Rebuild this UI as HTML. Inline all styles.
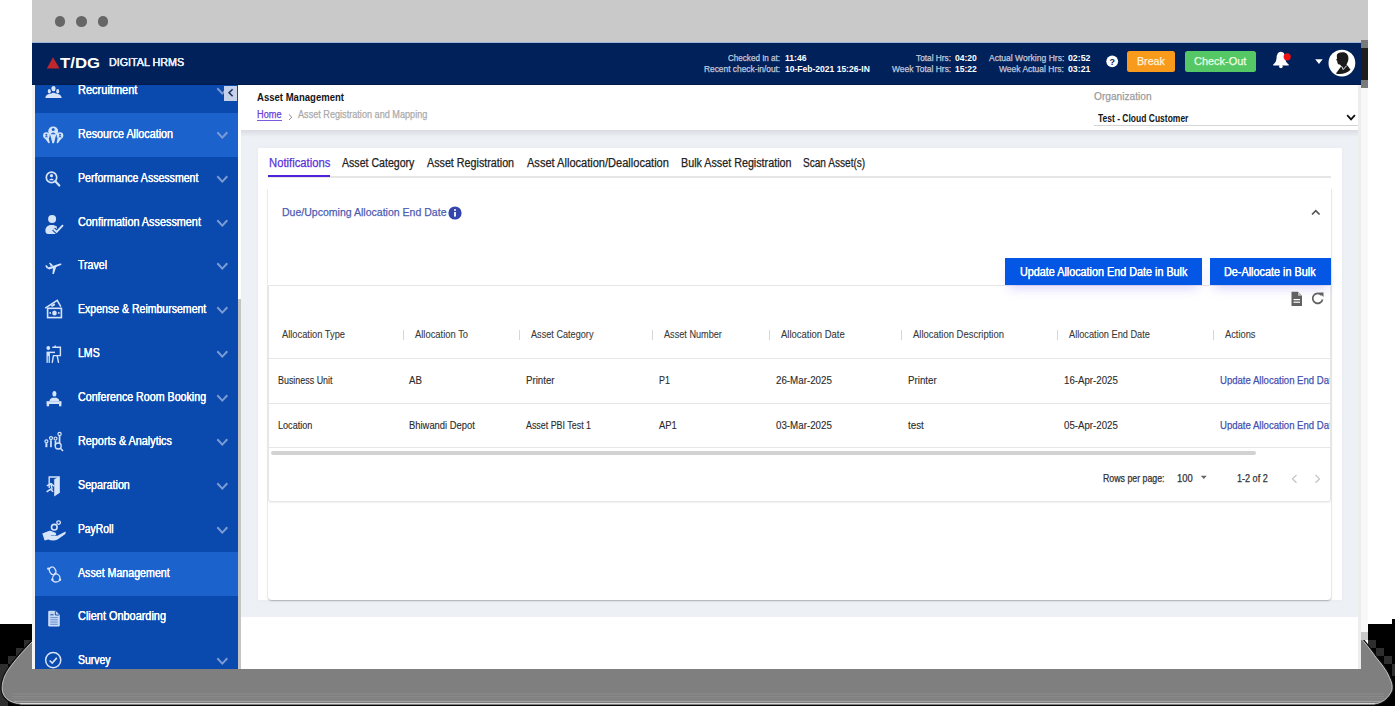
<!DOCTYPE html>
<html><head><meta charset="utf-8"><style>
html,body{margin:0;padding:0;}
body{width:1395px;height:706px;overflow:hidden;position:relative;background:#fff;font-family:"Liberation Sans",sans-serif;}
.r{position:absolute;display:block;}
.t{position:absolute;white-space:nowrap;transform-origin:0 0;}
.t4{-webkit-text-stroke:0.25px currentColor;}
</style></head><body>
<div class="r" style="left:0px;top:624px;width:32.00px;height:82.00px;background:#000;"></div>
<div class="r" style="left:1368px;top:624px;width:27.00px;height:82.00px;background:#000;"></div>
<div class="r" style="left:1392px;top:619px;width:3.00px;height:87.00px;background:#000;"></div>
<div class="r" style="left:0px;top:704.5px;width:1395.00px;height:1.50px;background:#000;"></div>
<svg class="r" style="left:0;top:0" width="1395" height="706">
<g fill="#2e2e2e"><rect x="24" y="640" width="8" height="8"/><rect x="16" y="648" width="8" height="8"/><rect x="8" y="656" width="8" height="8"/><rect x="0" y="664" width="8" height="42"/>
<rect x="1368" y="640" width="8" height="8"/><rect x="1376" y="648" width="8" height="8"/><rect x="1384" y="656" width="8" height="8"/><rect x="1392" y="664" width="3" height="12"/></g>
<path d="M32.7,641.3 C26,648 14,661 8.2,669.9 C4,676 2,683 2.2,689 C2.5,695 6,700 13.6,702.5 C16,703.4 19,703.9 21.8,703.9 L1372.3,703.9 C1376,703.9 1378,703.4 1380.6,702.3 C1386,700 1390,695 1391.9,690.2 C1392.5,686 1392,684 1391,681.2 C1389,676 1387,672 1385,669.2 C1381,663 1377,659 1374.6,655.6 C1370,649 1365,643 1361,638.3" fill="none" stroke="#111" stroke-width="3.4"/>
<path d="M32.7,641.3 C26,648 14,661 8.2,669.9 C4,676 2,683 2.2,689 C2.5,695 6,700 13.6,702.5 C16,703.4 19,703.9 21.8,703.9 L1372.3,703.9 C1376,703.9 1378,703.4 1380.6,702.3 C1386,700 1390,695 1391.9,690.2 C1392.5,686 1392,684 1391,681.2 C1389,676 1387,672 1385,669.2 C1381,663 1377,659 1374.6,655.6 C1370,649 1365,643 1361,638.3 L1361,669 L32.7,669 Z" fill="#7f7f7f"/>
<path d="M32.7,641.3 C26,648 14,661 8.2,669.9 C4,676 2,683 2.2,689 C2.5,695 6,700 13.6,702.5 C16,703.4 19,703.9 21.8,703.9 L1372.3,703.9 C1376,703.9 1378,703.4 1380.6,702.3 C1386,700 1390,695 1391.9,690.2 C1392.5,686 1392,684 1391,681.2 C1389,676 1387,672 1385,669.2 C1381,663 1377,659 1374.6,655.6 C1370,649 1365,643 1361,638.3" fill="none" stroke="#d2d2d2" stroke-width="0.9"/>
<rect x="12" y="693.5" width="1372" height="1" fill="#8c8c8c"/>
<rect x="12" y="696" width="1372" height="1" fill="#8a8a8a"/>
<rect x="12" y="698.2" width="1372" height="0.8" fill="#8a8a8a"/>
<rect x="14" y="700.8" width="1368" height="1" fill="#a6a6a6"/>
<rect x="20" y="703" width="1355" height="1.3" fill="#dadada"/>
</svg>
<div class="r" style="left:32px;top:0px;width:1336.00px;height:42.00px;background:#c9c9c9;"></div>
<div class="r" style="left:54.5px;top:16.4px;width:10.6px;height:10.6px;border-radius:50%;background:#666"></div>
<div class="r" style="left:76.1px;top:16.4px;width:10.6px;height:10.6px;border-radius:50%;background:#666"></div>
<div class="r" style="left:97.7px;top:16.4px;width:10.6px;height:10.6px;border-radius:50%;background:#666"></div>
<div class="r" style="left:32px;top:42px;width:1329.00px;height:43.00px;background:#01215a;"></div>
<div class="r" style="left:32px;top:42px;width:1329.00px;height:1.00px;background:#9fb4d8;"></div>
<div class="r" style="left:32px;top:84px;width:1329.00px;height:1.00px;background:#011a4c;"></div>
<div class="r" style="left:1361px;top:40px;width:7.00px;height:8.00px;background:#7a7a7a;"></div>
<div class="r" style="left:1361px;top:48px;width:7.00px;height:32.00px;background:#1e1e1e;"></div>
<div class="r" style="left:1361px;top:80px;width:7.00px;height:8.00px;background:#7a7a7a;"></div>
<svg class="r" style="left:46px;top:57px" width="15" height="12"><polygon points="0.8,11.4 7,0.2 13.6,11.4" fill="#c0262d"/></svg>
<div class="r" style="left:32px;top:85px;width:3.00px;height:584.00px;background:#f4f4f4;"></div>
<div class="r" style="left:35px;top:85px;width:203.00px;height:584.00px;background:#0a49ae;"></div>
<div class="r" style="left:35px;top:112.9px;width:203.00px;height:43.88px;background:#1b62cc;"></div>
<div class="r" style="left:35px;top:551.7px;width:203.00px;height:43.88px;background:#1b62cc;"></div>
<svg class="r" style="left:216.1px;top:86.92000000000002px" width="12.6" height="8.6"><polyline points="2.0,2.0 6.3,6.6 10.6,2.0" fill="none" stroke="#7d9bd2" stroke-width="2.0" stroke-linecap="square"/></svg>
<svg class="r" style="left:216.1px;top:130.79999999999998px" width="12.6" height="8.6"><polyline points="2.0,2.0 6.3,6.6 10.6,2.0" fill="none" stroke="#7d9bd2" stroke-width="2.0" stroke-linecap="square"/></svg>
<svg class="r" style="left:216.1px;top:174.67999999999998px" width="12.6" height="8.6"><polyline points="2.0,2.0 6.3,6.6 10.6,2.0" fill="none" stroke="#7d9bd2" stroke-width="2.0" stroke-linecap="square"/></svg>
<svg class="r" style="left:216.1px;top:218.56px" width="12.6" height="8.6"><polyline points="2.0,2.0 6.3,6.6 10.6,2.0" fill="none" stroke="#7d9bd2" stroke-width="2.0" stroke-linecap="square"/></svg>
<svg class="r" style="left:216.1px;top:262.44px" width="12.6" height="8.6"><polyline points="2.0,2.0 6.3,6.6 10.6,2.0" fill="none" stroke="#7d9bd2" stroke-width="2.0" stroke-linecap="square"/></svg>
<svg class="r" style="left:216.1px;top:306.32px" width="12.6" height="8.6"><polyline points="2.0,2.0 6.3,6.6 10.6,2.0" fill="none" stroke="#7d9bd2" stroke-width="2.0" stroke-linecap="square"/></svg>
<svg class="r" style="left:216.1px;top:350.2px" width="12.6" height="8.6"><polyline points="2.0,2.0 6.3,6.6 10.6,2.0" fill="none" stroke="#7d9bd2" stroke-width="2.0" stroke-linecap="square"/></svg>
<svg class="r" style="left:216.1px;top:394.08000000000004px" width="12.6" height="8.6"><polyline points="2.0,2.0 6.3,6.6 10.6,2.0" fill="none" stroke="#7d9bd2" stroke-width="2.0" stroke-linecap="square"/></svg>
<svg class="r" style="left:216.1px;top:437.96000000000004px" width="12.6" height="8.6"><polyline points="2.0,2.0 6.3,6.6 10.6,2.0" fill="none" stroke="#7d9bd2" stroke-width="2.0" stroke-linecap="square"/></svg>
<svg class="r" style="left:216.1px;top:481.84000000000003px" width="12.6" height="8.6"><polyline points="2.0,2.0 6.3,6.6 10.6,2.0" fill="none" stroke="#7d9bd2" stroke-width="2.0" stroke-linecap="square"/></svg>
<svg class="r" style="left:216.1px;top:525.7200000000001px" width="12.6" height="8.6"><polyline points="2.0,2.0 6.3,6.6 10.6,2.0" fill="none" stroke="#7d9bd2" stroke-width="2.0" stroke-linecap="square"/></svg>
<svg class="r" style="left:216.1px;top:657.3600000000001px" width="12.6" height="8.6"><polyline points="2.0,2.0 6.3,6.6 10.6,2.0" fill="none" stroke="#7d9bd2" stroke-width="2.0" stroke-linecap="square"/></svg>
<div class="r" style="left:238px;top:85px;width:3.00px;height:214.00px;background:#ffffff;"></div>
<div class="r" style="left:238px;top:299px;width:3.00px;height:370.00px;background:#c4c4c4;"></div>
<div class="r" style="left:224px;top:86px;width:13.00px;height:15.00px;background:#c5d2ea;"></div>
<svg class="r" style="left:226px;top:88px" width="10" height="11"><polyline points="6.6,1.2 3.1,4.7 6.6,8.2" fill="none" stroke="#1e3260" stroke-width="1.6"/></svg>
<div class="r" style="left:241px;top:85px;width:1117.00px;height:584.00px;background:#ffffff;"></div>
<div class="r" style="left:1358px;top:85px;width:3.00px;height:584.00px;background:#ededed;"></div>
<div class="r" style="left:1361px;top:88px;width:7.00px;height:544.00px;background:#f8f8f8;"></div>
<div class="r" style="left:1361px;top:632px;width:7.00px;height:8.00px;background:#c8c8c8;"></div>
<div class="r" style="left:241px;top:130px;width:1117.00px;height:487.00px;background:#edf0f5;"></div>
<div class="r" style="left:241px;top:130px;width:1117.00px;height:7.00px;background:linear-gradient(#d9dce2,#edf0f5);"></div>
<div class="r" style="left:1094px;top:125px;width:263.50px;height:1.00px;background:#d5d5d5;"></div>
<svg class="r" style="left:1345.65px;top:113.60000000000001px" width="10.1" height="7.2"><polyline points="1.8,1.8 5.05,5.4 8.3,1.8" fill="none" stroke="#111" stroke-width="1.8" stroke-linecap="square"/></svg>
<div class="r" style="left:257px;top:119.6px;width:24.80px;height:1.00px;background:#7b5ae0;"></div>
<svg class="r" style="left:287px;top:111.5px" width="7" height="9"><polyline points="2,2.5 4.8,5.2 2,7.9" fill="none" stroke="#888" stroke-width="1"/></svg>
<div class="r" style="left:257.5px;top:148px;width:1084.50px;height:452.00px;background:#ffffff;box-shadow:0 0 5px rgba(0,0,0,0.035)"></div>
<div class="r" style="left:268px;top:176px;width:1062.50px;height:2.00px;background:#e6e6e6;"></div>
<div class="r" style="left:268.2px;top:175.4px;width:62.30px;height:2.00px;background:#4d22d8;"></div>
<div class="r" style="left:268px;top:188px;width:1063px;height:412px;background:#fff;border-radius:0 0 4px 4px;box-shadow:0 1px 2px rgba(0,0,0,0.2),-1px 1px 1px rgba(0,0,0,0.035),1px 1px 1px rgba(0,0,0,0.05)"></div>
<svg class="r" style="left:448px;top:206px" width="14" height="14"><circle cx="7" cy="7" r="6.6" fill="#3446ad"/><rect x="6.1" y="6" width="1.8" height="4.6" fill="#fff"/><circle cx="7" cy="4" r="1" fill="#fff"/></svg>
<svg class="r" style="left:1310px;top:208px" width="12" height="9"><polyline points="2,6.5 5.8,2.7 9.6,6.5" fill="none" stroke="#555" stroke-width="1.7"/></svg>
<div class="r" style="left:1127.3px;top:50.5px;width:47.5px;height:21.3px;background:#f89b1d;border-radius:2.5px"></div>
<div class="r" style="left:1184.6px;top:50.5px;width:71.1px;height:21.3px;background:#55c764;border-radius:2.5px"></div>
<svg class="r" style="left:1106px;top:55px" width="13" height="13"><circle cx="6.2" cy="6.3" r="5.9" fill="#fff"/><text x="6.2" y="10" text-anchor="middle" font-family="Liberation Sans" font-weight="700" font-size="9" fill="#01215a">?</text></svg>
<svg class="r" style="left:1271px;top:50px" width="22" height="20"><path d="M9.9,1.8 C12.8,2 14,4.5 14.2,7.5 C14.4,10.5 15,12.5 17.7,14.6 L17.7,15.6 L2.2,15.6 L2.2,14.6 C4.8,12.5 5.4,10.5 5.6,7.5 C5.8,4.5 7,2 9.9,1.8 Z" fill="#fff"/><circle cx="9.9" cy="16.4" r="1.8" fill="#fff"/><circle cx="16.2" cy="6.8" r="3.6" fill="#ee1111"/></svg>
<svg class="r" style="left:1313px;top:58px" width="11" height="7"><polygon points="2.2,1.3 9.7,1.3 5.95,6" fill="#fff"/></svg>
<svg class="r" style="left:1328px;top:49px" width="28" height="28"><circle cx="13.9" cy="14.1" r="13.4" fill="#fff"/>
<path d="M9,5.5 C10.5,3.3 14,2.8 16.8,3.6 C19.5,4.4 20.6,7 20.4,10 C20.2,12.5 19.4,14 18.6,15.3 L18.8,17.2 L13.2,17 C12.6,16 12.2,15.4 11.2,15.4 C10,15.4 9.6,14.6 9.6,13.7 L9.1,12.8 L9.4,12.1 L8.9,11.5 L8.1,11.1 L9,9.5 C9,8 8.6,6.8 9,5.5 Z" fill="#1a1a1a"/>
<path d="M7.9,24.4 L13.5,17 L19.5,16.6 L22.5,20.8 C18,25 12,25.8 7.9,24.4 Z" fill="#1a1a1a"/>
<path d="M13.6,17.2 L15.2,20.5 L18.6,16.8" fill="none" stroke="#fff" stroke-width="0.9"/></svg>
<div class="r" style="left:268px;top:285px;width:1062.5px;height:216.5px;background:#fff;border:1px solid #e6e6e6;box-sizing:border-box;border-radius:0 0 3px 3px;box-shadow:0 1px 1.5px rgba(0,0,0,0.06)"></div>
<div class="r" style="left:1005px;top:257.5px;width:196.5px;height:27px;background:#0357e4;box-shadow:0 7px 12px -4px rgba(120,90,240,0.28)"></div>
<div class="r" style="left:1209.5px;top:257.5px;width:121px;height:27px;background:#0357e4;box-shadow:0 7px 12px -4px rgba(120,90,240,0.28)"></div>
<svg class="r" style="left:1290px;top:291px" width="13" height="16"><path d="M1.5,0.8 L8,0.8 L12,4.8 L12,15 L1.5,15 Z" fill="#616161"/><path d="M8,0.8 L8,4.8 L12,4.8" fill="#bdbdbd"/><rect x="3.5" y="8" width="6.5" height="1.2" fill="#fff"/><rect x="3.5" y="10.6" width="6.5" height="1.2" fill="#fff"/></svg>
<svg class="r" style="left:1311px;top:291px" width="14" height="15"><path d="M10.6,4.2 A5,5 0 1 0 11.6,8.5" fill="none" stroke="#616161" stroke-width="1.7"/><polygon points="8,1.5 12.5,1.5 12.5,6" fill="#616161"/></svg>
<div class="r" style="left:402.5px;top:330px;width:1.00px;height:9.50px;background:#d7d7d7;"></div>
<div class="r" style="left:519.3px;top:330px;width:1.00px;height:9.50px;background:#d7d7d7;"></div>
<div class="r" style="left:651.9px;top:330px;width:1.00px;height:9.50px;background:#d7d7d7;"></div>
<div class="r" style="left:769.1px;top:330px;width:1.00px;height:9.50px;background:#d7d7d7;"></div>
<div class="r" style="left:901.0px;top:330px;width:1.00px;height:9.50px;background:#d7d7d7;"></div>
<div class="r" style="left:1057.1px;top:330px;width:1.00px;height:9.50px;background:#d7d7d7;"></div>
<div class="r" style="left:1213.0px;top:330px;width:1.00px;height:9.50px;background:#d7d7d7;"></div>
<div class="r" style="left:269px;top:357.5px;width:1061.00px;height:1.20px;background:#e6e6e6;"></div>
<div class="r" style="left:269px;top:402.5px;width:1061.00px;height:1.20px;background:#e6e6e6;"></div>
<div class="r" style="left:269px;top:447.0px;width:1061.00px;height:1.20px;background:#e6e6e6;"></div>
<div class="r" style="left:271px;top:451.2px;width:984.5px;height:3.6px;background:#d2d2d2;border-radius:2px"></div>
<svg class="r" style="left:1200px;top:475px" width="8" height="5"><polygon points="0.8,0.8 6.8,0.8 3.8,4" fill="#666"/></svg>
<svg class="r" style="left:1290px;top:474px" width="9" height="10"><polyline points="6.5,1 2.5,4.9 6.5,8.8" fill="none" stroke="#c2c2c2" stroke-width="1.2"/></svg>
<svg class="r" style="left:1313px;top:474px" width="9" height="10"><polyline points="2.5,1 6.5,4.9 2.5,8.8" fill="none" stroke="#c2c2c2" stroke-width="1.2"/></svg>
<svg class="r" style="left:41.5px;top:79.02px" width="24" height="24"><g fill="#d6e4fa"><ellipse cx="11.5" cy="9.6" rx="2.1" ry="2.7"/><ellipse cx="7.3" cy="12.3" rx="1.5" ry="2.3"/><ellipse cx="15.7" cy="12.3" rx="1.5" ry="2.3"/><path d="M3.3,19 C3.6,16.5 5.5,15 8,14.8 L9.3,14.6 C10.3,13.6 12.7,13.6 13.7,14.6 L15,14.8 C17.5,15 19.4,16.5 19.7,19 Z"/></g></svg>
<svg class="r" style="left:41.5px;top:122.90px" width="24" height="24"><g fill="#d6e4fa"><circle cx="11.2" cy="8.3" r="4.9"/><path d="M8.2,11.5 L14.2,11.5 L12,20.2 L10.4,20.2 Z"/><circle cx="4.4" cy="12.6" r="3.3"/><path d="M2.2,14.6 L6.6,14.4 L7.8,20 L6.6,20.2 Z"/><circle cx="18" cy="12.6" r="3.3"/><path d="M15.8,14.4 L20.2,14.6 L15.8,20.2 L14.6,20 Z"/></g><g fill="#1b62cc"><circle cx="11.2" cy="6.6" r="1.5"/><path d="M8.6,11.2 Q11.2,7.8 13.8,11.2 Z"/><circle cx="4.4" cy="11.8" r="1"/><path d="M2.8,14.2 Q4.4,12 6,14.2 Z"/><circle cx="18" cy="11.8" r="1"/><path d="M16.4,14.2 Q18,12 19.6,14.2 Z"/><path d="M8.4,13.8 L9.6,20.5 L8.6,20.5 Z"/><path d="M14,13.8 L12.8,20.5 L13.8,20.5 Z"/></g></svg>
<svg class="r" style="left:41.5px;top:166.78px" width="24" height="24"><circle cx="9.5" cy="10.4" r="5.2" fill="none" stroke="#d6e4fa" stroke-width="1.7"/><path d="M13.3,14.3 L17.3,18.5" stroke="#d6e4fa" stroke-width="2.2" stroke-linecap="round"/><g fill="#d6e4fa"><circle cx="9.5" cy="8.7" r="1.6"/><path d="M6.8,13.2 Q9.5,9.8 12.2,13.2 Z"/></g></svg>
<svg class="r" style="left:41.5px;top:210.66px" width="24" height="24"><g fill="#d6e4fa"><circle cx="10.1" cy="7.9" r="4"/><path d="M3.5,20.5 C3,16.5 5.5,14 9.5,14 C12,14 13.8,14.6 14.8,15.6 L15,23 L6,23 C4.5,23 3.6,22 3.5,20.5 Z"/></g><path d="M11.6,18 L14.6,21 L21,14.2" fill="none" stroke="#0a49ae" stroke-width="4"/><path d="M11.6,18 L14.6,21 L21,14.2" fill="none" stroke="#d6e4fa" stroke-width="1.9"/></svg>
<svg class="r" style="left:41.5px;top:254.54px" width="24" height="24"><g fill="#d6e4fa"><path d="M4.4,12.9 L18.2,8.6 C19.6,8.3 20,9.6 18.9,10.1 L14.2,12 L11.9,18.9 L10.4,19.1 L11,13.2 L7.2,14.5 Z"/><path d="M4.4,13 L3.2,10.4 L4.6,10.2 L6.8,12.4 Z"/><path d="M8.8,11.3 L7,7.9 L8.3,7.7 L11.2,10.6 Z"/></g></svg>
<svg class="r" style="left:41.5px;top:298.42px" width="24" height="24"><path d="M3.2,10.1 L15.2,2.3 L18.8,8.6" fill="none" stroke="#d6e4fa" stroke-width="1.5"/><rect x="9" y="6.2" width="4" height="2" fill="#d6e4fa" transform="rotate(-33 11 7)"/><rect x="5.6" y="10.3" width="13.8" height="9.3" fill="#0a49ae" stroke="#d6e4fa" stroke-width="1.6"/><g fill="#d6e4fa"><ellipse cx="12.5" cy="14.9" rx="2.3" ry="2.5"/><circle cx="8.2" cy="14.9" r="0.9"/><circle cx="16.8" cy="14.9" r="0.9"/></g></svg>
<svg class="r" style="left:41.5px;top:342.30px" width="24" height="24"><g fill="#d6e4fa"><circle cx="6.3" cy="6" r="1.9"/><rect x="4.5" y="9.6" width="3.4" height="11.2"/><rect x="7.5" y="9.6" width="5.5" height="1.5"/></g><g fill="none" stroke="#d6e4fa" stroke-width="1.4"><path d="M10.3,5.3 L18.4,5.3 L18.4,13.6 L11,13.6"/><path d="M11.4,13.6 L10.2,20.8 M15.2,13.6 L16.6,20.8 M13.2,3.6 L13.2,5.3"/></g><rect x="5.8" y="14" width="0.8" height="6.8" fill="#0a49ae"/></svg>
<svg class="r" style="left:41.5px;top:386.18px" width="24" height="24"><g fill="#d6e4fa"><ellipse cx="12.4" cy="7.8" rx="2" ry="2.9"/><path d="M7.4,15.2 C7.6,12.6 9.6,11.4 12.4,11.4 C15.2,11.4 17.2,12.6 17.4,15.2 Z"/><rect x="4.5" y="15.2" width="15" height="2.8"/><rect x="4.7" y="18" width="2.4" height="2.3"/><rect x="17" y="18" width="2.4" height="2.3"/></g><rect x="11.6" y="10.6" width="1.6" height="1" fill="#0a49ae"/></svg>
<svg class="r" style="left:41.5px;top:430.06px" width="24" height="24"><g fill="#d6e4fa"><rect x="3.4" y="13.2" width="2" height="4"/><rect x="8.1" y="10.2" width="1.7" height="7"/><rect x="12.6" y="10.4" width="1.7" height="5.5"/><rect x="16.7" y="5.8" width="1.7" height="8.5"/></g><g fill="none" stroke="#d6e4fa" stroke-width="1.2"><circle cx="4.4" cy="11.3" r="1.5"/><circle cx="9" cy="8.1" r="1.5"/><circle cx="13.5" cy="8.5" r="1.5"/><circle cx="17.6" cy="3.9" r="1.6"/><circle cx="16.2" cy="16" r="3" fill="#0a49ae" stroke-width="1.3"/><path d="M18.4,18.3 L21,21" stroke-width="1.6"/></g></svg>
<svg class="r" style="left:41.5px;top:473.94px" width="24" height="24"><path d="M7.2,14 L7.2,3 L17,3 L17,19" fill="none" stroke="#d6e4fa" stroke-width="1.4"/><path d="M12.2,5.2 L17.4,2.6 L17.4,19 L12.2,22.6 Z" fill="#d6e4fa"/><g fill="none" stroke="#d6e4fa" stroke-width="1.5"><path d="M4.8,11.8 L9,9.6 L12.2,12.3"/><path d="M4.6,17.8 L8.4,15.3 L11.2,17.8"/><path d="M8.8,9.6 L10.2,15.6"/></g></svg>
<svg class="r" style="left:41.5px;top:517.82px" width="24" height="24"><g fill="#d6e4fa"><path d="M0.3,15.6 L7.4,12.7 C9,12.4 10.8,13.6 13,14.6 C14.8,15.3 14.6,17.4 12.6,17.3 L8.8,17 L9,17.6 L15.4,17.8 L23.4,13.6 C23.8,14.8 23.8,15.6 23,16.3 L15.6,21.4 C12.8,22.8 9.5,22.8 6.2,21.5 L2.6,22.4 Z"/></g><circle cx="12.3" cy="9.2" r="2.8" fill="none" stroke="#d6e4fa" stroke-width="1.6"/><circle cx="16.6" cy="4.6" r="1.8" fill="none" stroke="#d6e4fa" stroke-width="1.3"/></svg>
<svg class="r" style="left:41.5px;top:561.70px" width="24" height="24"><g fill="none" stroke="#d6e4fa" stroke-width="1.3"><ellipse cx="10.6" cy="8.8" rx="3" ry="3.9" transform="rotate(-28 10.6 8.8)"/><path d="M13.2,11.6 C16,11.8 18.2,13.8 18,16.8 C17.8,19.2 16,20 14,20 C12,20 10.4,19 10.4,17 C10.4,15 11.8,13 13.2,11.6 Z"/></g><g fill="#d6e4fa"><circle cx="6.2" cy="6.6" r="1.2"/><circle cx="10.4" cy="17.8" r="1.2"/><circle cx="18" cy="17.8" r="1.2"/><circle cx="13.2" cy="11.6" r="1"/></g></svg>
<svg class="r" style="left:41.5px;top:605.58px" width="24" height="24"><path d="M6.8,5.3 L13.6,5.3 L17.2,8.9 L17.2,20 L6.8,20 Z" fill="#d6e4fa" fill-opacity="0.92" stroke="#d6e4fa" stroke-width="1" stroke-linejoin="round"/><path d="M13.4,5.3 L13.4,9 L17.2,9" fill="none" stroke="#0a49ae" stroke-width="0.9"/><g fill="#0a49ae" opacity="0.55"><rect x="8.3" y="11.2" width="7.4" height="0.9"/><rect x="8.3" y="13.4" width="7.4" height="0.9"/><rect x="8.3" y="15.6" width="7.4" height="0.9"/><rect x="8.3" y="17.8" width="7.4" height="0.9"/></g><rect x="8.3" y="8" width="3.2" height="1.4" fill="#0a49ae" opacity="0.7"/></svg>
<svg class="r" style="left:41.5px;top:649.46px" width="24" height="24"><circle cx="11.2" cy="11.1" r="7.6" fill="none" stroke="#d6e4fa" stroke-width="1.5"/><path d="M7.6,11.5 L10.2,14 L14.8,8.9" fill="none" stroke="#d6e4fa" stroke-width="1.6"/></svg>
<div class="t" style="left:59.5px;top:55.28px;font-size:15.5px;line-height:15.5px;font-weight:700;color:#ffffff;transform:scaleX(1.0829);">T/DG</div>
<div class="t t4" style="left:108.8px;top:56.61px;font-size:11.8px;line-height:11.8px;font-weight:400;color:#e4eaf7;transform:scaleX(0.9093);text-shadow:0 0 0.4px #fff,0 0 0.4px #fff;">DIGITAL HRMS</div>
<div class="t t4" style="left:727.8px;top:53.68px;font-size:9px;line-height:9px;font-weight:400;color:#c3c9dc;transform:scaleX(0.8976);">Checked In at:</div>
<div class="t" style="left:784.8px;top:53.68px;font-size:9px;line-height:9px;font-weight:700;color:#ffffff;transform:scaleX(0.9542);">11:46</div>
<div class="t t4" style="left:703.7px;top:65.18px;font-size:9px;line-height:9px;font-weight:400;color:#c3c9dc;transform:scaleX(0.9287);">Recent check-in/out:</div>
<div class="t" style="left:784.8px;top:65.18px;font-size:9px;line-height:9px;font-weight:700;color:#ffffff;transform:scaleX(0.9470);">10-Feb-2021 15:26-IN</div>
<div class="t t4" style="left:916.0px;top:53.68px;font-size:9px;line-height:9px;font-weight:400;color:#c3c9dc;transform:scaleX(0.9207);">Total Hrs:</div>
<div class="t" style="left:954.9px;top:53.68px;font-size:9px;line-height:9px;font-weight:700;color:#ffffff;transform:scaleX(0.9465);">04:20</div>
<div class="t t4" style="left:891.8px;top:65.18px;font-size:9px;line-height:9px;font-weight:400;color:#c3c9dc;transform:scaleX(0.9367);">Week Total Hrs:</div>
<div class="t" style="left:954.9px;top:65.18px;font-size:9px;line-height:9px;font-weight:700;color:#ffffff;transform:scaleX(0.9465);">15:22</div>
<div class="t t4" style="left:988.5px;top:53.68px;font-size:9px;line-height:9px;font-weight:400;color:#c3c9dc;transform:scaleX(0.9488);">Actual Working Hrs:</div>
<div class="t" style="left:1067.7px;top:53.68px;font-size:9px;line-height:9px;font-weight:700;color:#ffffff;transform:scaleX(0.9726);">02:52</div>
<div class="t t4" style="left:999.0px;top:65.18px;font-size:9px;line-height:9px;font-weight:400;color:#c3c9dc;transform:scaleX(0.9410);">Week Actual Hrs:</div>
<div class="t" style="left:1067.7px;top:65.18px;font-size:9px;line-height:9px;font-weight:700;color:#ffffff;transform:scaleX(0.9726);">03:21</div>
<div class="t t4" style="left:1136.9px;top:55.77px;font-size:11.5px;line-height:11.5px;font-weight:400;color:#fff4dc;transform:scaleX(0.9285);">Break</div>
<div class="t t4" style="left:1193.8px;top:55.77px;font-size:11.5px;line-height:11.5px;font-weight:400;color:#eaffe6;transform:scaleX(0.9533);">Check-Out</div>
<div class="t t4" style="left:77.5px;top:83.86px;font-size:12px;line-height:12px;font-weight:400;color:#ffffff;transform:scaleX(0.9183);text-shadow:0 0 0.3px #fff;">Recruitment</div>
<div class="t t4" style="left:77.5px;top:127.74px;font-size:12px;line-height:12px;font-weight:400;color:#ffffff;transform:scaleX(0.8957);text-shadow:0 0 0.3px #fff;">Resource Allocation</div>
<div class="t t4" style="left:77.5px;top:171.62px;font-size:12px;line-height:12px;font-weight:400;color:#ffffff;transform:scaleX(0.8805);text-shadow:0 0 0.3px #fff;">Performance Assessment</div>
<div class="t t4" style="left:77.5px;top:215.50px;font-size:12px;line-height:12px;font-weight:400;color:#ffffff;transform:scaleX(0.9033);text-shadow:0 0 0.3px #fff;">Confirmation Assessment</div>
<div class="t t4" style="left:77.5px;top:259.38px;font-size:12px;line-height:12px;font-weight:400;color:#ffffff;transform:scaleX(0.8843);text-shadow:0 0 0.3px #fff;">Travel</div>
<div class="t t4" style="left:77.5px;top:303.26px;font-size:12px;line-height:12px;font-weight:400;color:#ffffff;transform:scaleX(0.8783);text-shadow:0 0 0.3px #fff;">Expense &amp; Reimbursement</div>
<div class="t t4" style="left:77.5px;top:347.14px;font-size:12px;line-height:12px;font-weight:400;color:#ffffff;transform:scaleX(0.8790);text-shadow:0 0 0.3px #fff;">LMS</div>
<div class="t t4" style="left:77.5px;top:391.02px;font-size:12px;line-height:12px;font-weight:400;color:#ffffff;transform:scaleX(0.8890);text-shadow:0 0 0.3px #fff;">Conference Room Booking</div>
<div class="t t4" style="left:77.5px;top:434.90px;font-size:12px;line-height:12px;font-weight:400;color:#ffffff;transform:scaleX(0.9025);text-shadow:0 0 0.3px #fff;">Reports &amp; Analytics</div>
<div class="t t4" style="left:77.5px;top:478.78px;font-size:12px;line-height:12px;font-weight:400;color:#ffffff;transform:scaleX(0.8924);text-shadow:0 0 0.3px #fff;">Separation</div>
<div class="t t4" style="left:77.5px;top:522.66px;font-size:12px;line-height:12px;font-weight:400;color:#ffffff;transform:scaleX(0.8583);text-shadow:0 0 0.3px #fff;">PayRoll</div>
<div class="t t4" style="left:77.5px;top:566.54px;font-size:12px;line-height:12px;font-weight:400;color:#ffffff;transform:scaleX(0.8869);text-shadow:0 0 0.3px #fff;">Asset Management</div>
<div class="t t4" style="left:77.5px;top:610.42px;font-size:12px;line-height:12px;font-weight:400;color:#ffffff;transform:scaleX(0.9097);text-shadow:0 0 0.3px #fff;">Client Onboarding</div>
<div class="t t4" style="left:77.5px;top:654.30px;font-size:12px;line-height:12px;font-weight:400;color:#ffffff;transform:scaleX(0.8726);text-shadow:0 0 0.3px #fff;">Survey</div>
<div class="t" style="left:257.1px;top:92.39px;font-size:11px;line-height:11px;font-weight:700;color:#141414;transform:scaleX(0.8677);">Asset Management</div>
<div class="t t4" style="left:257.1px;top:109.83px;font-size:10px;line-height:10px;font-weight:400;color:#6a43d8;transform:scaleX(0.9180);">Home</div>
<div class="t t4" style="left:297.7px;top:109.83px;font-size:10px;line-height:10px;font-weight:400;color:#ababab;transform:scaleX(0.9122);">Asset Registration and Mapping</div>
<div class="t t4" style="left:1094.1px;top:90.79px;font-size:11px;line-height:11px;font-weight:400;color:#9b9b9b;transform:scaleX(0.9234);">Organization</div>
<div class="t" style="left:1097.7px;top:113.94px;font-size:10px;line-height:10px;font-weight:700;color:#151515;transform:scaleX(0.8490);">Test - Cloud Customer</div>
<div class="t t4" style="left:269.0px;top:156.74px;font-size:12px;line-height:12px;font-weight:400;color:#5b30dc;transform:scaleX(0.9377);">Notifications</div>
<div class="t t4" style="left:342.4px;top:156.74px;font-size:12px;line-height:12px;font-weight:400;color:#222;transform:scaleX(0.8824);">Asset Category</div>
<div class="t t4" style="left:427.1px;top:156.74px;font-size:12px;line-height:12px;font-weight:400;color:#222;transform:scaleX(0.8943);">Asset Registration</div>
<div class="t t4" style="left:526.5px;top:156.74px;font-size:12px;line-height:12px;font-weight:400;color:#222;transform:scaleX(0.9209);">Asset Allocation/Deallocation</div>
<div class="t t4" style="left:680.5px;top:156.74px;font-size:12px;line-height:12px;font-weight:400;color:#222;transform:scaleX(0.8954);">Bulk Asset Registration</div>
<div class="t t4" style="left:803.1px;top:156.74px;font-size:12px;line-height:12px;font-weight:400;color:#222;transform:scaleX(0.8402);">Scan Asset(s)</div>
<div class="t t4" style="left:281.9px;top:207.17px;font-size:11.5px;line-height:11.5px;font-weight:400;color:#4c5cb2;transform:scaleX(0.9157);">Due/Upcoming Allocation End Date</div>
<div class="t t4" style="left:1019.6px;top:266.14px;font-size:12px;line-height:12px;font-weight:400;color:#ffffff;transform:scaleX(0.8994);text-shadow:0 0 0.3px #fff;">Update Allocation End Date in Bulk</div>
<div class="t t4" style="left:1224.0px;top:266.14px;font-size:12px;line-height:12px;font-weight:400;color:#ffffff;transform:scaleX(0.9034);text-shadow:0 0 0.3px #fff;">De-Allocate in Bulk</div>
<div class="t t4" style="left:282.0px;top:328.81px;font-size:10.5px;line-height:10.5px;font-weight:400;color:#3a3a3a;transform:scaleX(0.8869);-webkit-text-stroke:0.1px currentColor;">Allocation Type</div>
<div class="t t4" style="left:414.5px;top:328.81px;font-size:10.5px;line-height:10.5px;font-weight:400;color:#3a3a3a;transform:scaleX(0.8946);-webkit-text-stroke:0.1px currentColor;">Allocation To</div>
<div class="t t4" style="left:531.2px;top:328.81px;font-size:10.5px;line-height:10.5px;font-weight:400;color:#3a3a3a;transform:scaleX(0.8705);-webkit-text-stroke:0.1px currentColor;">Asset Category</div>
<div class="t t4" style="left:663.8px;top:328.81px;font-size:10.5px;line-height:10.5px;font-weight:400;color:#3a3a3a;transform:scaleX(0.8703);-webkit-text-stroke:0.1px currentColor;">Asset Number</div>
<div class="t t4" style="left:780.5px;top:328.81px;font-size:10.5px;line-height:10.5px;font-weight:400;color:#3a3a3a;transform:scaleX(0.9019);-webkit-text-stroke:0.1px currentColor;">Allocation Date</div>
<div class="t t4" style="left:913.3px;top:328.81px;font-size:10.5px;line-height:10.5px;font-weight:400;color:#3a3a3a;transform:scaleX(0.9003);-webkit-text-stroke:0.1px currentColor;">Allocation Description</div>
<div class="t t4" style="left:1069.0px;top:328.81px;font-size:10.5px;line-height:10.5px;font-weight:400;color:#3a3a3a;transform:scaleX(0.8771);-webkit-text-stroke:0.1px currentColor;">Allocation End Date</div>
<div class="t t4" style="left:1224.7px;top:328.81px;font-size:10.5px;line-height:10.5px;font-weight:400;color:#3a3a3a;transform:scaleX(0.8857);-webkit-text-stroke:0.1px currentColor;">Actions</div>
<div class="t t4" style="left:277.5px;top:374.91px;font-size:10.5px;line-height:10.5px;font-weight:400;color:#2c2c2c;transform:scaleX(0.8489);-webkit-text-stroke:0.12px currentColor;">Business Unit</div>
<div class="t t4" style="left:409.4px;top:374.91px;font-size:10.5px;line-height:10.5px;font-weight:400;color:#2c2c2c;transform:scaleX(0.9204);-webkit-text-stroke:0.12px currentColor;">AB</div>
<div class="t t4" style="left:526.4px;top:374.91px;font-size:10.5px;line-height:10.5px;font-weight:400;color:#2c2c2c;transform:scaleX(0.9244);-webkit-text-stroke:0.12px currentColor;">Printer</div>
<div class="t t4" style="left:658.6px;top:374.91px;font-size:10.5px;line-height:10.5px;font-weight:400;color:#2c2c2c;transform:scaleX(0.8487);-webkit-text-stroke:0.12px currentColor;">P1</div>
<div class="t t4" style="left:775.6px;top:374.91px;font-size:10.5px;line-height:10.5px;font-weight:400;color:#2c2c2c;transform:scaleX(0.9297);-webkit-text-stroke:0.12px currentColor;">26-Mar-2025</div>
<div class="t t4" style="left:908.1px;top:374.91px;font-size:10.5px;line-height:10.5px;font-weight:400;color:#2c2c2c;transform:scaleX(0.9277);-webkit-text-stroke:0.12px currentColor;">Printer</div>
<div class="t t4" style="left:1063.7px;top:374.91px;font-size:10.5px;line-height:10.5px;font-weight:400;color:#2c2c2c;transform:scaleX(0.9216);-webkit-text-stroke:0.12px currentColor;">16-Apr-2025</div>
<div class="t t4" style="left:277.5px;top:419.91px;font-size:10.5px;line-height:10.5px;font-weight:400;color:#2c2c2c;transform:scaleX(0.8664);-webkit-text-stroke:0.12px currentColor;">Location</div>
<div class="t t4" style="left:409.4px;top:419.91px;font-size:10.5px;line-height:10.5px;font-weight:400;color:#2c2c2c;transform:scaleX(0.8960);-webkit-text-stroke:0.12px currentColor;">Bhiwandi Depot</div>
<div class="t t4" style="left:526.4px;top:419.91px;font-size:10.5px;line-height:10.5px;font-weight:400;color:#2c2c2c;transform:scaleX(0.8459);-webkit-text-stroke:0.12px currentColor;">Asset PBI Test 1</div>
<div class="t t4" style="left:658.6px;top:419.91px;font-size:10.5px;line-height:10.5px;font-weight:400;color:#2c2c2c;transform:scaleX(0.8963);-webkit-text-stroke:0.12px currentColor;">AP1</div>
<div class="t t4" style="left:775.6px;top:419.91px;font-size:10.5px;line-height:10.5px;font-weight:400;color:#2c2c2c;transform:scaleX(0.9297);-webkit-text-stroke:0.12px currentColor;">03-Mar-2025</div>
<div class="t t4" style="left:908.1px;top:419.91px;font-size:10.5px;line-height:10.5px;font-weight:400;color:#2c2c2c;transform:scaleX(0.9328);-webkit-text-stroke:0.12px currentColor;">test</div>
<div class="t t4" style="left:1063.7px;top:419.91px;font-size:10.5px;line-height:10.5px;font-weight:400;color:#2c2c2c;transform:scaleX(0.9216);-webkit-text-stroke:0.12px currentColor;">05-Apr-2025</div>
<div class="t t4" style="left:1102.5px;top:473.94px;font-size:10px;line-height:10px;font-weight:400;color:#333;transform:scaleX(0.8780);">Rows per page:</div>
<div class="t t4" style="left:1177.3px;top:473.94px;font-size:10px;line-height:10px;font-weight:400;color:#333;transform:scaleX(0.9408);">100</div>
<div class="t t4" style="left:1237.3px;top:473.94px;font-size:10px;line-height:10px;font-weight:400;color:#333;transform:scaleX(0.9050);">1-2 of 2</div>
<div class="t t4" style="left:1219.6px;top:374.91px;font-size:10.5px;line-height:10.5px;font-weight:400;color:#4451b0;transform:scaleX(0.9111);clip-path:inset(0 6.5% 0 0);">Update Allocation End Date</div>
<div class="t t4" style="left:1219.6px;top:419.91px;font-size:10.5px;line-height:10.5px;font-weight:400;color:#4451b0;transform:scaleX(0.9111);clip-path:inset(0 6.5% 0 0);">Update Allocation End Date</div>
</body></html>
